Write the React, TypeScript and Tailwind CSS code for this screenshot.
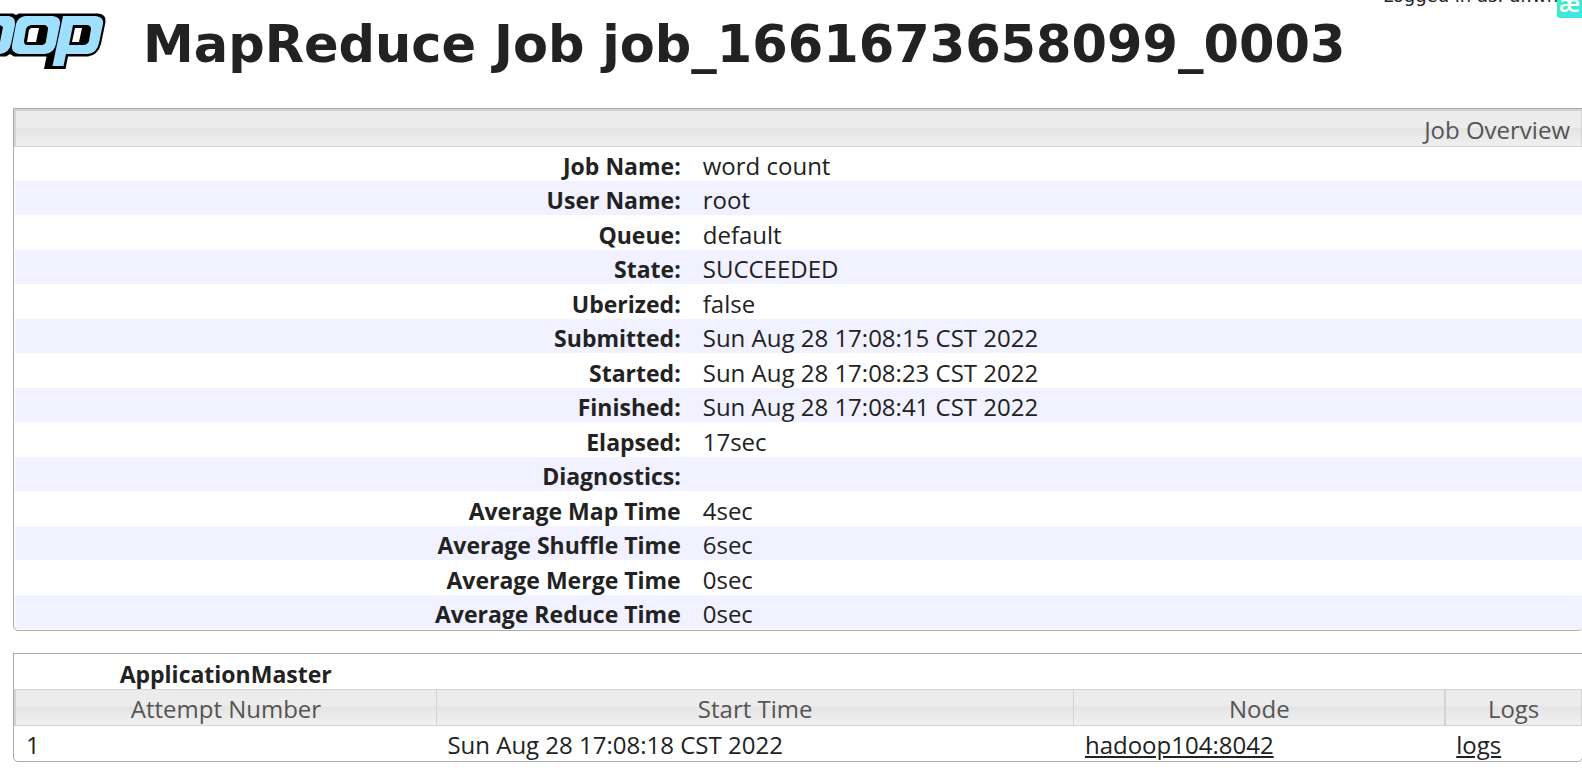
import { ReactNode } from 'react';

const overview = [
  { label: 'Job Name:', value: 'word count' },
  { label: 'User Name:', value: 'root' },
  { label: 'Queue:', value: 'default' },
  { label: 'State:', value: 'SUCCEEDED' },
  { label: 'Uberized:', value: 'false' },
  { label: 'Submitted:', value: 'Sun Aug 28 17:08:15 CST 2022' },
  { label: 'Started:', value: 'Sun Aug 28 17:08:23 CST 2022' },
  { label: 'Finished:', value: 'Sun Aug 28 17:08:41 CST 2022' },
  { label: 'Elapsed:', value: '17sec' },
  { label: 'Diagnostics:', value: '' },
  { label: 'Average Map Time', value: '4sec' },
  { label: 'Average Shuffle Time', value: '6sec' },
  { label: 'Average Merge Time', value: '0sec' },
  { label: 'Average Reduce Time', value: '0sec' },
];

const attempts = [
  { id: 1, start: 'Sun Aug 28 17:08:18 CST 2022', node: 'hadoop104:8042', logs: 'logs' },
];

// Tail end of the Hadoop wordmark, the rest runs off the left edge
function Logo() {
  return (
    <svg viewBox="0 0 108 72" className="h-[72px] w-[108px] shrink-0" aria-label="hadoop">
      <path
        d="M0 13.5H13L16 15L19 13.5H98Q106.500 14 105.500 22L101 44Q98 55 88 56.500H68L65.500 69H44L46.500 56.500H14L10 54L6 56.500H0Z"
        fill="#000"
      />
      <path d="M0 16H9Q16 17 15 25L11 44Q9 53 0 54V42L3 27L0 25Z" fill="#a0e0ff" />
      <path
        fillRule="evenodd"
        fill="#a0e0ff"
        d="M25 16H53Q61 17 60 24L56 44Q54 53 45 54H19Q11 53 12 45L16 24Q18 17 25 16ZM31 25Q27 26 26 29L24 41Q24 45 27 45H42Q46 44 46 41L48 29Q48 26 45 25Z"
      />
      <path
        fillRule="evenodd"
        fill="#a0e0ff"
        d="M63 16H96Q104 17 103 24L99 43Q97 53 88 54H66L63.500 66H52.500ZM73 25L69 45H84Q88 44 89 41L91 29Q91 26 88 25Z"
      />
      <path d="M31 28H39L36 42H27L29 30Z" fill="#fff" />
      <path d="M75 28H82L79 42H72Z" fill="#fff" />
    </svg>
  );
}

function HeadCell({ children, className, colSpan }: { children: ReactNode; className: string; colSpan?: number }) {
  return (
    <th
      colSpan={colSpan}
      className={`h-[36px] border-[#d3d3d3] bg-[linear-gradient(#ececec_50%,#e4e4e4_50%,#f0f0f0)] px-[11px] pb-0 pt-[4px] font-normal text-[#555] ${className}`}
    >
      {children}
    </th>
  );
}

export default function App() {
  return (
    <div className="overflow-hidden bg-white font-['Open_Sans',sans-serif] text-[24px] leading-[28px] text-[#222]">
      <header className="relative flex h-[108px] items-start">
        <Logo />
        <h1 className="ml-[35px] mt-[15px] whitespace-nowrap font-['DejaVu_Sans',sans-serif] text-[51px] font-bold leading-[60px]">
          MapReduce Job job_1661673658099_0003
        </h1>
        <div className="absolute right-0 top-0 h-[18px] w-[199px] overflow-hidden">
          <p className="-mt-[14px] whitespace-nowrap font-['DejaVu_Sans',sans-serif] text-[18px] leading-[20px]">
            Logged in as: dr.who
          </p>
          <span className="absolute right-0 top-0 flex h-[18px] w-[25px] items-center justify-center overflow-hidden rounded-bl-[3px] bg-linear-to-br from-[#3df0b8] to-[#40e4f0] pb-[12px] text-[24px] font-semibold leading-[28px] text-white">
            æ
          </span>
        </div>
      </header>

      <main className="-mr-px ml-[13px]">
        <section className="rounded-b-[5px] border border-[#aaa] pb-px">
          <table className="w-full table-fixed border-collapse">
            <colgroup>
              <col className="w-[43.2%]" />
              <col />
            </colgroup>
            <thead>
              <tr>
                <HeadCell colSpan={2} className="border-y border-l-2 border-r border-t-2 text-right">
                  Job Overview
                </HeadCell>
              </tr>
            </thead>
            <tbody>
              {overview.map((row) => (
                <tr key={row.label} className="h-[34px] odd:h-[35px] even:bg-[#f1f1ff]">
                  <th scope="row" className="px-[11px] pb-0 pt-[4px] text-right text-[23px] font-bold">
                    {row.label}
                  </th>
                  <td className="px-[11px] pb-0 pt-[4px]">{row.value}</td>
                </tr>
              ))}
            </tbody>
          </table>
        </section>

        <section className="mt-[22px] rounded-b-[5px] border border-[#aaa]">
          <table className="w-full table-fixed border-collapse">
            <colgroup>
              <col className="w-[26.9%]" />
              <col className="w-[40.7%]" />
              <col className="w-[23.7%]" />
              <col />
            </colgroup>
            <thead>
              <tr className="h-[35px]">
                <th className="pb-0 pt-[6px] text-[23px] font-bold">ApplicationMaster</th>
                <td colSpan={3} />
              </tr>
              <tr>
                <HeadCell className="border border-l-2">Attempt Number</HeadCell>
                <HeadCell className="border">Start Time</HeadCell>
                <HeadCell className="border border-r-2">Node</HeadCell>
                <HeadCell className="border">Logs</HeadCell>
              </tr>
            </thead>
            <tbody>
              {attempts.map((a) => (
                <tr key={a.id} className="h-[36px]">
                  <td className="px-[11px] pb-0 pt-[4px]">{a.id}</td>
                  <td className="px-[11px] pb-0 pt-[4px]">{a.start}</td>
                  <td className="px-[11px] pb-0 pt-[4px]">
                    <a href="#node" className="underline">{a.node}</a>
                  </td>
                  <td className="px-[11px] pb-0 pt-[4px]">
                    <a href="#logs" className="underline">{a.logs}</a>
                  </td>
                </tr>
              ))}
            </tbody>
          </table>
        </section>
      </main>
    </div>
  );
}
